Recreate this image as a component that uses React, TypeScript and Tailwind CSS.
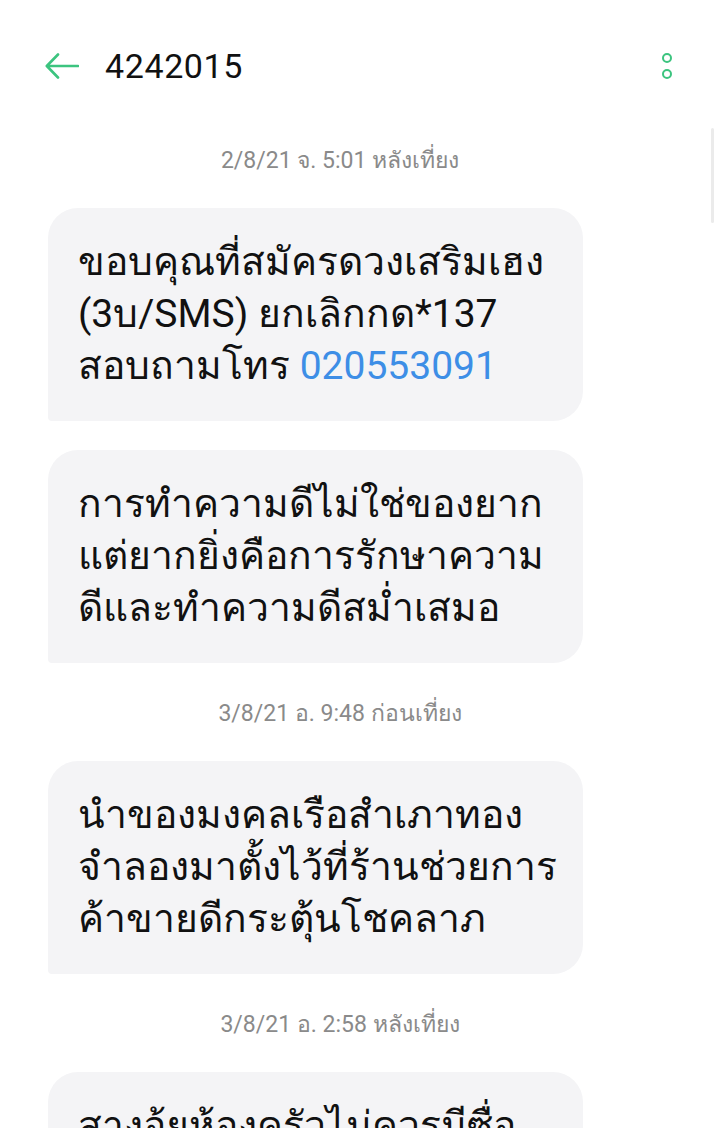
import React from 'react';

const FONT = { fontFamily: 'Roboto, "Noto Sans", "DejaVu Sans", sans-serif' };

type Msg = { lines: React.ReactNode[] };

const Stamp: React.FC<{ text: string }> = ({ text }) => (
  <div className="pr-[39px] pt-[37px] pb-[33px] text-center text-[23px] leading-[28px] text-[#8a8a8a]">
    {text}
  </div>
);

const Bubble: React.FC<Msg> = ({ lines }) => (
  <div className="ml-[48px] w-[535px] rounded-[30px] rounded-bl-[4px] bg-[#f4f4f6] px-[30px] pt-[28px] pb-[29px] text-[39px] leading-[52px] text-[#111]">
    {lines.map((l, i) => (
      <div key={i} className="whitespace-nowrap">
        {l}
      </div>
    ))}
  </div>
);

export default function App() {
  return (
    <div className="relative h-[1128px] w-[719px] overflow-hidden bg-white" style={FONT}>
      {/* header */}
      <div className="flex h-[110px] items-center pt-[22px] pl-[45px] pr-[47px]">
        <svg width="34" height="26" viewBox="0 0 34 26" fill="none" className="shrink-0">
          <path d="M33 13H2M13 1.5L1.8 13L13 24.5" stroke="#3cc47f" strokeWidth="2.6" strokeLinecap="round" strokeLinejoin="round" />
        </svg>
        <div className="ml-[26px] text-[34px] tracking-[0.6px] text-[#111]">4242015</div>
        <div className="ml-auto flex flex-col items-center gap-[6px]">
          <span className="block h-[10px] w-[10px] rounded-full border-[2.5px] border-[#3cc47f]" />
          <span className="block h-[10px] w-[10px] rounded-full border-[2.5px] border-[#3cc47f]" />
        </div>
      </div>

      <div className="absolute left-[711px] top-[128px] h-[95px] w-[3px] rounded-full bg-[#ebebeb]" />

      <Stamp text="2/8/21 จ. 5:01 หลังเที่ยง" />
      <Bubble
        lines={[
          'ขอบคุณที่สมัครดวงเสริมเฮง',
          '(3บ/SMS) ยกเลิกกด*137',
          <>
            สอบถามโทร <span className="text-[#3d8ee6]">020553091</span>
          </>,
        ]}
      />
      <div className="h-[29px]" />
      <Bubble
        lines={[
          'การทำความดีไม่ใช่ของยาก',
          'แต่ยากยิ่งคือการรักษาความ',
          'ดีและทำความดีสม่ำเสมอ',
        ]}
      />
      <Stamp text="3/8/21 อ. 9:48 ก่อนเที่ยง" />
      <Bubble
        lines={[
          'นำของมงคลเรือสำเภาทอง',
          'จำลองมาตั้งไว้ที่ร้านช่วยการ',
          'ค้าขายดีกระตุ้นโชคลาภ',
        ]}
      />
      <Stamp text="3/8/21 อ. 2:58 หลังเที่ยง" />
      <Bubble
        lines={[
          'สางอ้ยห้องครัวไม่ควรมีซื่อ',
          'ควรมีของมงคล',
          'เพื่อเสริมดวง',
        ]}
      />
    </div>
  );
}
